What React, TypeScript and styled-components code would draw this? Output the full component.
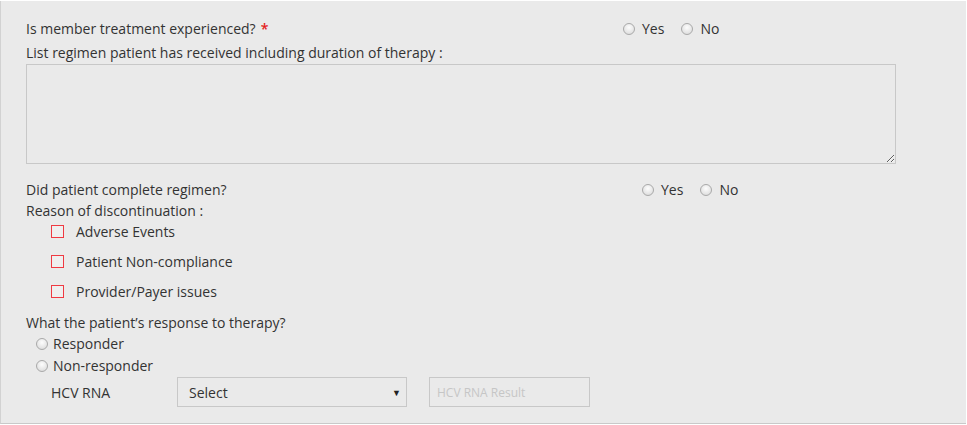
import React from 'react';
import styled, { createGlobalStyle } from 'styled-components';

const GlobalStyle = createGlobalStyle`
  html, body {
    margin: 0;
    padding: 0;
    background: #fff;
  }
  body {
    font-family: 'Open Sans', 'Liberation Sans', sans-serif;
    font-size: 14px;
    color: #333;
  }
`;

const Panel = styled.div`
  margin-top: 1px;
  background: #eaeaea;
  border-left: 1px solid #d2d2d2;
  border-bottom: 1px solid #c9c9c9;
  padding: 18px 0 16px 25px;
  width: 966px;
  box-sizing: border-box;
  height: 423px;
`;

const QuestionRow = styled.div<{ $labelWidth: number; $top: number }>`
  display: grid;
  grid-template-columns: ${(p) => p.$labelWidth}px auto;
  align-items: center;
  line-height: 20px;
  margin-top: ${(p) => p.$top}px;
`;

const Label = styled.div<{ $top?: number }>`
  line-height: 20px;
  margin-top: ${(p) => p.$top ?? 0}px;
`;

const Required = styled.span`
  color: #e41c1c;
  margin-left: 5px;
  font-weight: 600;
`;

const Options = styled.div`
  display: flex;
  align-items: center;
  gap: 17px;
`;

const Option = styled.label`
  display: flex;
  align-items: center;
  gap: 7px;
  color: #333;
`;

const RadioDot = styled.span`
  display: inline-block;
  width: 12px;
  height: 12px;
  box-sizing: border-box;
  border-radius: 50%;
  border: 1px solid #a9a9a9;
  background: radial-gradient(circle at 50% 35%, #fdfdfd 0%, #e6e6e6 60%, #d6d6d6 100%);
  flex: none;
`;

const TextArea = styled.textarea`
  display: block;
  margin-top: 1px;
  width: 870px;
  height: 100px;
  box-sizing: border-box;
  background: #eaeaea;
  border: 1px solid #c8c8c8;
  resize: vertical;
  font-family: inherit;
`;

const CheckList = styled.div`
  display: flex;
  flex-direction: column;
  gap: 10px;
  margin-top: 1px;
  padding-left: 25px;
`;

const CheckRow = styled.label`
  display: flex;
  align-items: center;
  gap: 12px;
  line-height: 20px;
`;

const CheckBox = styled.span`
  display: inline-block;
  width: 13px;
  height: 13px;
  background: #efefef;
  box-shadow: inset 0 0 0 1px #ef3a42;
  margin-top: -2px;
  flex: none;
`;

const ResponseRow = styled.label<{ $top: number }>`
  display: flex;
  align-items: center;
  gap: 5px;
  padding-left: 10px;
  line-height: 20px;
  margin-top: ${(p) => p.$top}px;
`;

const HcvRow = styled.div`
  display: flex;
  align-items: center;
  margin-top: 1px;
  padding-left: 25px;
`;

const HcvLabel = styled.span`
  width: 126px;
`;

const SelectBox = styled.div`
  width: 230px;
  height: 30px;
  box-sizing: border-box;
  border: 1px solid #c8c8c8;
  display: flex;
  align-items: center;
  justify-content: space-between;
  padding: 0 5px 0 11px;
`;

const Arrow = styled.span`
  font-size: 9px;
  color: #222;
`;

const ResultInput = styled.input`
  margin-left: 22px;
  width: 161px;
  height: 30px;
  box-sizing: border-box;
  border: 1px solid #c8c8c8;
  background: #eaeaea;
  padding: 0 7px;
  font-family: inherit;
  font-size: 12px;
  &::placeholder {
    color: #c6c6c6;
  }
`;

const reasons = ['Adverse Events', 'Patient Non-compliance', 'Provider/Payer issues'];

const YesNo = () => (
  <Options>
    <Option>
      <RadioDot />
      Yes
    </Option>
    <Option>
      <RadioDot />
      No
    </Option>
  </Options>
);

const App = (): JSX.Element => (
  <React.Fragment>
    <GlobalStyle />
    <Panel>
      <QuestionRow $labelWidth={597} $top={0}>
        <Label>
          Is member treatment experienced?<Required>*</Required>
        </Label>
        <YesNo />
      </QuestionRow>
      <Label $top={4}>List regimen patient has received including duration of therapy :</Label>
      <TextArea />

      <QuestionRow $labelWidth={616} $top={16}>
        <Label>Did patient complete regimen?</Label>
        <YesNo />
      </QuestionRow>
      <Label $top={1}>Reason of discontinuation :</Label>
      <CheckList>
        {reasons.map((reason) => (
          <CheckRow key={reason}>
            <CheckBox />
            {reason}
          </CheckRow>
        ))}
      </CheckList>

      <Label $top={11}>What the patient’s response to therapy?</Label>
      <ResponseRow $top={1}>
        <RadioDot />
        Responder
      </ResponseRow>
      <ResponseRow $top={2}>
        <RadioDot />
        Non-responder
      </ResponseRow>
      <HcvRow>
        <HcvLabel>HCV RNA</HcvLabel>
        <SelectBox>
          Select
          <Arrow>▼</Arrow>
        </SelectBox>
        <ResultInput placeholder="HCV RNA Result" />
      </HcvRow>
    </Panel>
  </React.Fragment>
);

export default App;
